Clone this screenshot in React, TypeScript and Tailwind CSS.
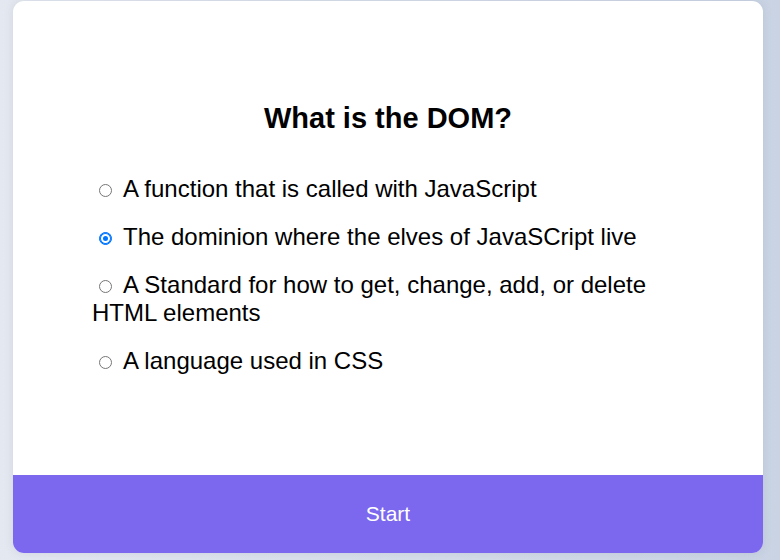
import React from "react";

const options = [
  "A function that is called with JavaScript",
  "The dominion where the elves of JavaSCript live",
  "A Standard for how to get, change, add, or delete HTML elements",
  "A language used in CSS",
];

export default function App() {
  return (
    <div
      className="w-full h-[560px] bg-gradient-to-r from-[#e4e8f0] to-[#c9d3e3] pt-[1px] px-[13px] overflow-hidden"
      style={{ fontFamily: '"Liberation Sans", Arial, sans-serif' }}
    >
      <div className="w-[750px] h-[552px] bg-white rounded-[11px] overflow-hidden flex flex-col shadow-[0_0_8px_rgba(100,116,139,0.15)]">
        <div className="flex-1 flex flex-col justify-center">
          <h2 className="text-center font-bold text-[29px] leading-[normal] text-black mb-[40px]">
            What is the DOM?
          </h2>
          <ul className="mx-[79px] flex flex-col gap-[20px]">
            {options.map((o, i) => (
              <li key={i} className="text-[24px] leading-[normal] text-black">
                <label>
                  <input
                    type="radio"
                    name="q"
                    defaultChecked={i === 1}
                    className="appearance-none inline-block align-baseline w-[13px] h-[13px] rounded-full border border-[#767676] bg-white ml-[7px] mr-[11px] mt-[3px] mb-0 checked:border-[#0075ff] checked:bg-[#0075ff] checked:shadow-[inset_0_0_0_1px_#0075ff,inset_0_0_0_3px_#ffffff]"
                  />
                  {o}
                </label>
              </li>
            ))}
          </ul>
        </div>
        <button className="h-[78px] w-full bg-[#7b68ee] text-white text-[21px]">
          Start
        </button>
      </div>
    </div>
  );
}
